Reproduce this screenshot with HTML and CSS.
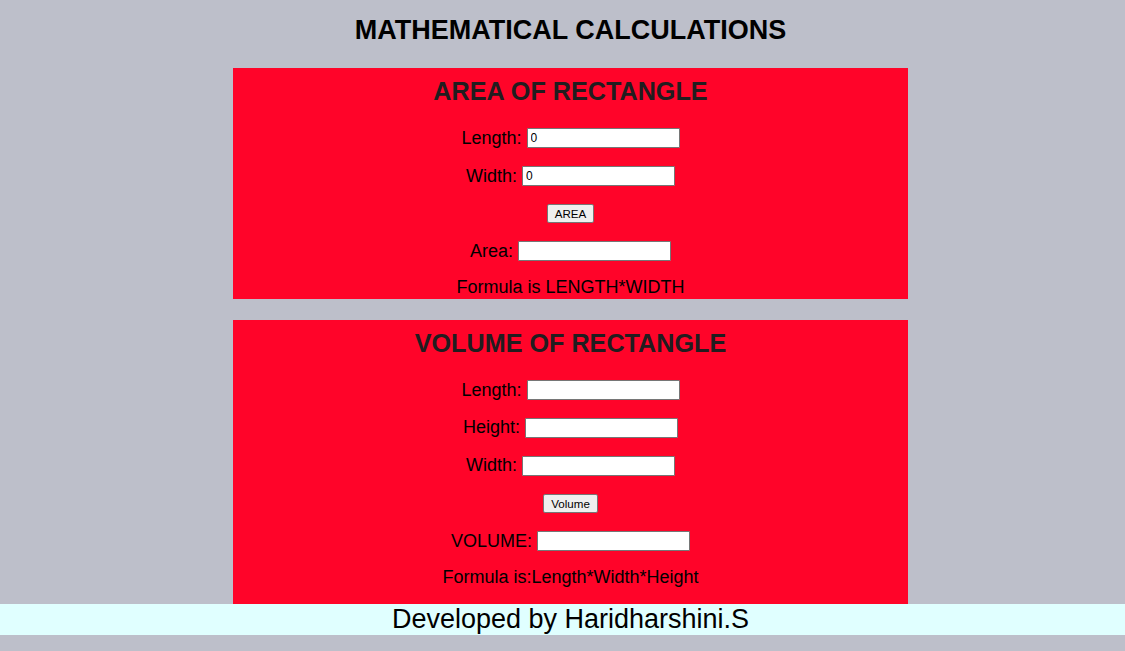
FILE: index.html
```html
<!DOCTYPE html>
<html lang="en">
<head>
<meta charset="utf-8">
<title>Mathematical Calculations</title>
<link rel="stylesheet" href="styles.css">
</head>
<body>
<main class="page">
  <h1 class="title">MATHEMATICAL CALCULATIONS</h1>

  <section class="card">
    <h2 class="card-title">AREA OF RECTANGLE</h2>
    <div class="rows">
      <div class="row"><label class="lbl">Length:</label><input class="field" type="text" value="0"></div>
      <div class="row"><label class="lbl">Width:</label><input class="field" type="text" value="0"></div>
      <div class="row"><button class="btn" type="button">AREA</button></div>
      <div class="row"><label class="lbl">Area:</label><input class="field" type="text" value=""></div>
    </div>
    <p class="formula">Formula is LENGTH*WIDTH</p>
  </section>

  <section class="card card-volume">
    <h2 class="card-title">VOLUME OF RECTANGLE</h2>
    <div class="rows">
      <div class="row"><label class="lbl">Length:</label><input class="field" type="text" value=""></div>
      <div class="row"><label class="lbl">Height:</label><input class="field" type="text" value=""></div>
      <div class="row"><label class="lbl">Width:</label><input class="field" type="text" value=""></div>
      <div class="row"><button class="btn" type="button">Volume</button></div>
      <div class="row"><label class="lbl">VOLUME:</label><input class="field" type="text" value=""></div>
    </div>
    <p class="formula">Formula is:Length*Width*Height</p>
  </section>
</main>
<footer class="footer">Developed by Haridharshini.S</footer>
</body>
</html>
```
FILE: styles.css
```css
html, body {
  margin: 0;
  padding: 0;
}
body {
  background: #bdbfca;
  font-family: "Liberation Sans", Arial, sans-serif;
  color: #000;
  height: 651px;
}
.page {
  padding-left: 16px;
}
.title {
  margin: 0 0 8px;
  height: 60px;
  line-height: 60px;
  font-size: 27px;
  font-weight: bold;
  text-align: center;
  color: #000;
}
.card {
  width: 675px;
  margin: 0 auto 21px;
  background: #ff0429;
  padding-bottom: 1.7px;
}
.card-volume {
  margin-bottom: 0;
  padding-bottom: 17px;
}
.card-title {
  margin: 0;
  height: 46px;
  line-height: 46px;
  font-size: 25.2px;
  font-weight: bold;
  color: #211d1f;
  text-align: center;
}
.rows {
  padding-top: 5.5px;
  display: flex;
  flex-direction: column;
}
.row {
  height: 37.7px;
  display: flex;
  align-items: center;
  justify-content: center;
}
.lbl {
  font-size: 18px;
  line-height: 20px;
  margin-right: 5px;
  padding-bottom: 1px;
  color: #000;
}
.field {
  box-sizing: border-box;
  width: 153px;
  height: 20px;
  border: 1px solid #767676;
  border-radius: 1px;
  background: #fff;
  padding: 0 3px;
  margin: 0;
  font-family: "Liberation Sans", Arial, sans-serif;
  font-size: 12px;
  color: #000;
  outline: none;
}
.btn {
  box-sizing: border-box;
  height: 19px;
  padding: 0 7px;
  margin: 0;
  border: 1px solid #767676;
  border-radius: 2px;
  background: #efefef;
  font-family: "Liberation Sans", Arial, sans-serif;
  font-size: 11.6px;
  color: #000;
  line-height: 17px;
}
.formula {
  margin: 7px 0 0;
  height: 20px;
  line-height: 20px;
  font-size: 18px;
  text-align: center;
}
.footer {
  box-sizing: border-box;
  height: 31px;
  line-height: 31px;
  padding-left: 16px;
  background: #e0ffff;
  font-size: 27px;
  text-align: center;
  color: #000;
}
```
